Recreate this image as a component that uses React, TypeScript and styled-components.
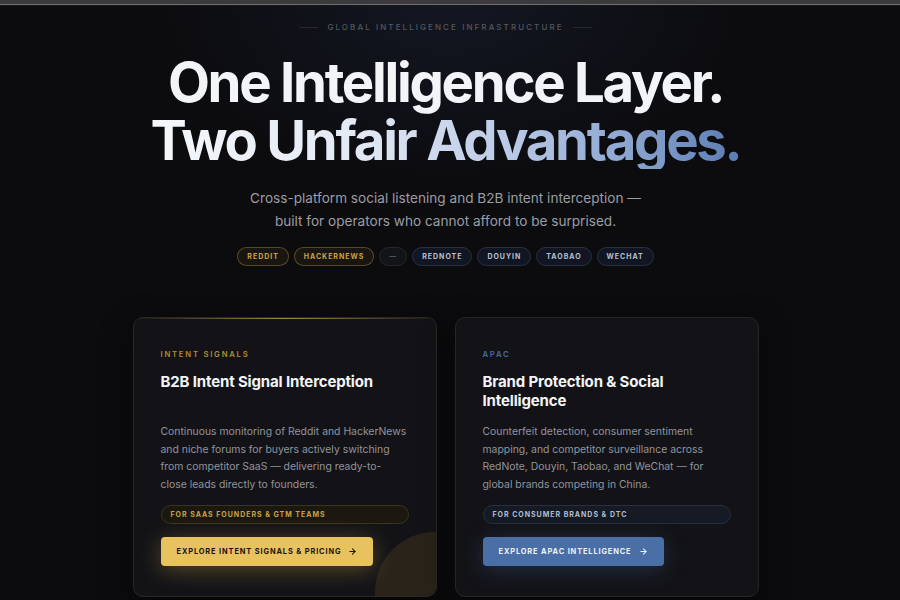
import styled, { createGlobalStyle } from 'styled-components';

const GlobalStyle = createGlobalStyle`
  html, body {
    margin: 0;
    padding: 0;
    background: #0c0c0f;
  }
  body {
    font-family: Inter, "Noto Sans", "Liberation Sans", sans-serif;
    -webkit-font-smoothing: antialiased;
  }
  * {
    box-sizing: border-box;
  }
`;

const Page = styled.div`
  min-height: 600px;
  height: 600px;
  overflow: hidden;
  background:
    radial-gradient(ellipse 420px 260px at 50% 0%, rgba(38, 52, 86, 0.28), transparent 70%),
    #0c0c0f;
  display: flex;
  flex-direction: column;
`;

const TopBar = styled.div`
  height: 5px;
  background: #3b3b3d;
  border-bottom: 1px solid #6e6e70;
  box-shadow: 0 1px 0 #17171a;
  flex-shrink: 0;
`;

const Hero = styled.section`
  display: flex;
  flex-direction: column;
  align-items: center;
  padding: 16px 9px 0 0;
`;

const Eyebrow = styled.div`
  display: flex;
  align-items: center;
  gap: 9px;
  font-size: 8px;
  line-height: 12px;
  font-weight: 500;
  letter-spacing: 0.26em;
  color: #55575e;
  text-transform: uppercase;

  &::before,
  &::after {
    content: '';
    width: 19px;
    height: 1px;
    background: #26282d;
  }
`;

const Headline = styled.h1`
  margin: 20px 0 0;
  font-size: 54.5px;
  line-height: 58px;
  font-weight: 700;
  letter-spacing: -0.042em;
  text-align: center;
  color: #f3f4f7;
`;

const Line = styled.span`
  display: block;
`;

const GradientLine = styled.span`
  display: block;
  background: linear-gradient(90deg, #f5f7fa 0%, #e3e9f4 35%, #bccbe6 60%, #8ea7d1 80%, #5a7cb3 100%);
  -webkit-background-clip: text;
  background-clip: text;
  color: transparent;
`;

const Subtitle = styled.p`
  margin: 18px 0 0;
  font-size: 13.6px;
  line-height: 23px;
  color: #9b9da5;
  text-align: center;
`;

const Pills = styled.div`
  display: flex;
  gap: 5px;
  margin-top: 14px;
`;

const Pill = styled.span<{ tone: 'gold' | 'blue' | 'mute' }>`
  display: inline-flex;
  align-items: center;
  height: 19px;
  padding: 0 9px;
  border-radius: 10px;
  font-size: 7px;
  font-weight: 700;
  letter-spacing: 0.14em;
  border: 1px solid
    ${({ tone }) =>
      tone === 'gold' ? 'rgba(201, 160, 58, 0.38)' : tone === 'blue' ? '#283143' : '#25272d'};
  background: ${({ tone }) =>
    tone === 'gold' ? 'rgba(201, 160, 58, 0.07)' : tone === 'blue' ? '#111622' : '#131418'};
  color: ${({ tone }) =>
    tone === 'gold' ? '#caa343' : tone === 'blue' ? '#b7c1d3' : '#585b63'};
`;

const Cards = styled.div`
  display: grid;
  grid-template-columns: 304px 304px;
  gap: 18px;
  margin-top: 51px;
  align-items: stretch;
`;

const Card = styled.article<{ accent: 'gold' | 'blue' }>`
  position: relative;
  overflow: hidden;
  display: flex;
  flex-direction: column;
  padding: 31px 27px 30px;
  border-radius: 10px;
  border: 1px solid ${({ accent }) => (accent === 'gold' ? '#2b2922' : '#24252b')};
  background: #131317;
  box-shadow: 0 10px 30px rgba(0, 0, 0, 0.55);

  &::before {
    content: '';
    position: absolute;
    top: 0;
    left: 0;
    right: 0;
    height: 1px;
    background: ${({ accent }) =>
      accent === 'gold'
        ? 'linear-gradient(90deg, transparent 0%, rgba(214, 172, 70, 0.75) 50%, transparent 100%)'
        : 'transparent'};
  }
`;

const Glow = styled.div`
  position: absolute;
  width: 120px;
  height: 120px;
  border-radius: 50%;
  right: -59px;
  bottom: -56px;
  background: rgba(130, 100, 40, 0.2);
  pointer-events: none;
`;

const Label = styled.div<{ accent: 'gold' | 'blue' }>`
  font-size: 7.7px;
  line-height: 12px;
  font-weight: 600;
  letter-spacing: 0.23em;
  color: ${({ accent }) => (accent === 'gold' ? '#b48d2e' : '#4b6da2')};
`;

const Title = styled.h2`
  margin: 11px 0 0;
  min-height: 38px;
  font-size: 15px;
  line-height: 19px;
  font-weight: 700;
  letter-spacing: -0.01em;
  color: #f4f5f7;
`;

const Body = styled.p`
  margin: 13px 0 0;
  font-size: 10.4px;
  line-height: 17.7px;
  color: #92949d;
  flex: 1;
`;

const Audience = styled.div<{ accent: 'gold' | 'blue' }>`
  margin-top: 11px;
  height: 19px;
  display: flex;
  align-items: center;
  padding: 0 9px;
  border-radius: 10px;
  font-size: 7px;
  font-weight: 700;
  letter-spacing: 0.14em;
  border: 1px solid ${({ accent }) => (accent === 'gold' ? '#3d3419' : '#273042')};
  background: ${({ accent }) => (accent === 'gold' ? '#1b1810' : '#151a24')};
  color: ${({ accent }) => (accent === 'gold' ? '#c9a343' : '#b4bed0')};
`;

const Actions = styled.div`
  margin-top: 13px;
  display: flex;
`;

const Button = styled.button<{ accent: 'gold' | 'blue' }>`
  display: inline-flex;
  align-items: center;
  gap: 7px;
  height: 29px;
  padding: 0 16px;
  border: none;
  border-radius: 4px;
  font-family: inherit;
  font-size: 7.4px;
  font-weight: 700;
  letter-spacing: 0.12em;
  cursor: pointer;
  background: ${({ accent }) => (accent === 'gold' ? '#e8c25e' : '#4a6ea6')};
  color: ${({ accent }) => (accent === 'gold' ? '#19140a' : '#eef2f9')};
  box-shadow: ${({ accent }) =>
    accent === 'gold'
      ? '0 4px 22px rgba(232, 190, 80, 0.32)'
      : '0 4px 22px rgba(74, 110, 166, 0.3)'};
  position: relative;
  z-index: 1;
`;

const Arrow = () => (
  <svg width="9" height="9" viewBox="0 0 24 24" fill="none" stroke="currentColor" strokeWidth="2.8" strokeLinecap="round" strokeLinejoin="round">
    <path d="M5 12h14" />
    <path d="m12 5 7 7-7 7" />
  </svg>
);

export default function App() {
  return (
    <>
      <GlobalStyle />
      <Page>
        <TopBar />
        <Hero>
          <Eyebrow>Global Intelligence Infrastructure</Eyebrow>
          <Headline>
            <Line>One Intelligence Layer.</Line>
            <GradientLine>Two Unfair Advantages.</GradientLine>
          </Headline>
          <Subtitle>
            Cross-platform social listening and B2B intent interception —
            <br />
            built for operators who cannot afford to be surprised.
          </Subtitle>
          <Pills>
            <Pill tone="gold">REDDIT</Pill>
            <Pill tone="gold">HACKERNEWS</Pill>
            <Pill tone="mute">—</Pill>
            <Pill tone="blue">REDNOTE</Pill>
            <Pill tone="blue">DOUYIN</Pill>
            <Pill tone="blue">TAOBAO</Pill>
            <Pill tone="blue">WECHAT</Pill>
          </Pills>
          <Cards>
            <Card accent="gold">
              <Glow />
              <Label accent="gold">INTENT SIGNALS</Label>
              <Title>B2B Intent Signal Interception</Title>
              <Body>
                Continuous monitoring of Reddit and HackerNews and niche forums for buyers
                actively switching from competitor SaaS — delivering ready-to-
                <br />
                close leads directly to founders.
              </Body>
              <Audience accent="gold">FOR SAAS FOUNDERS &amp; GTM TEAMS</Audience>
              <Actions>
                <Button accent="gold">
                  EXPLORE INTENT SIGNALS &amp; PRICING <Arrow />
                </Button>
              </Actions>
            </Card>
            <Card accent="blue">
              <Label accent="blue">APAC</Label>
              <Title>Brand Protection &amp; Social Intelligence</Title>
              <Body>
                Counterfeit detection, consumer sentiment mapping, and competitor
                surveillance across RedNote, Douyin, Taobao, and WeChat — for global brands
                competing in China.
              </Body>
              <Audience accent="blue">FOR CONSUMER BRANDS &amp; DTC</Audience>
              <Actions>
                <Button accent="blue">
                  EXPLORE APAC INTELLIGENCE <Arrow />
                </Button>
              </Actions>
            </Card>
          </Cards>
        </Hero>
      </Page>
    </>
  );
}
